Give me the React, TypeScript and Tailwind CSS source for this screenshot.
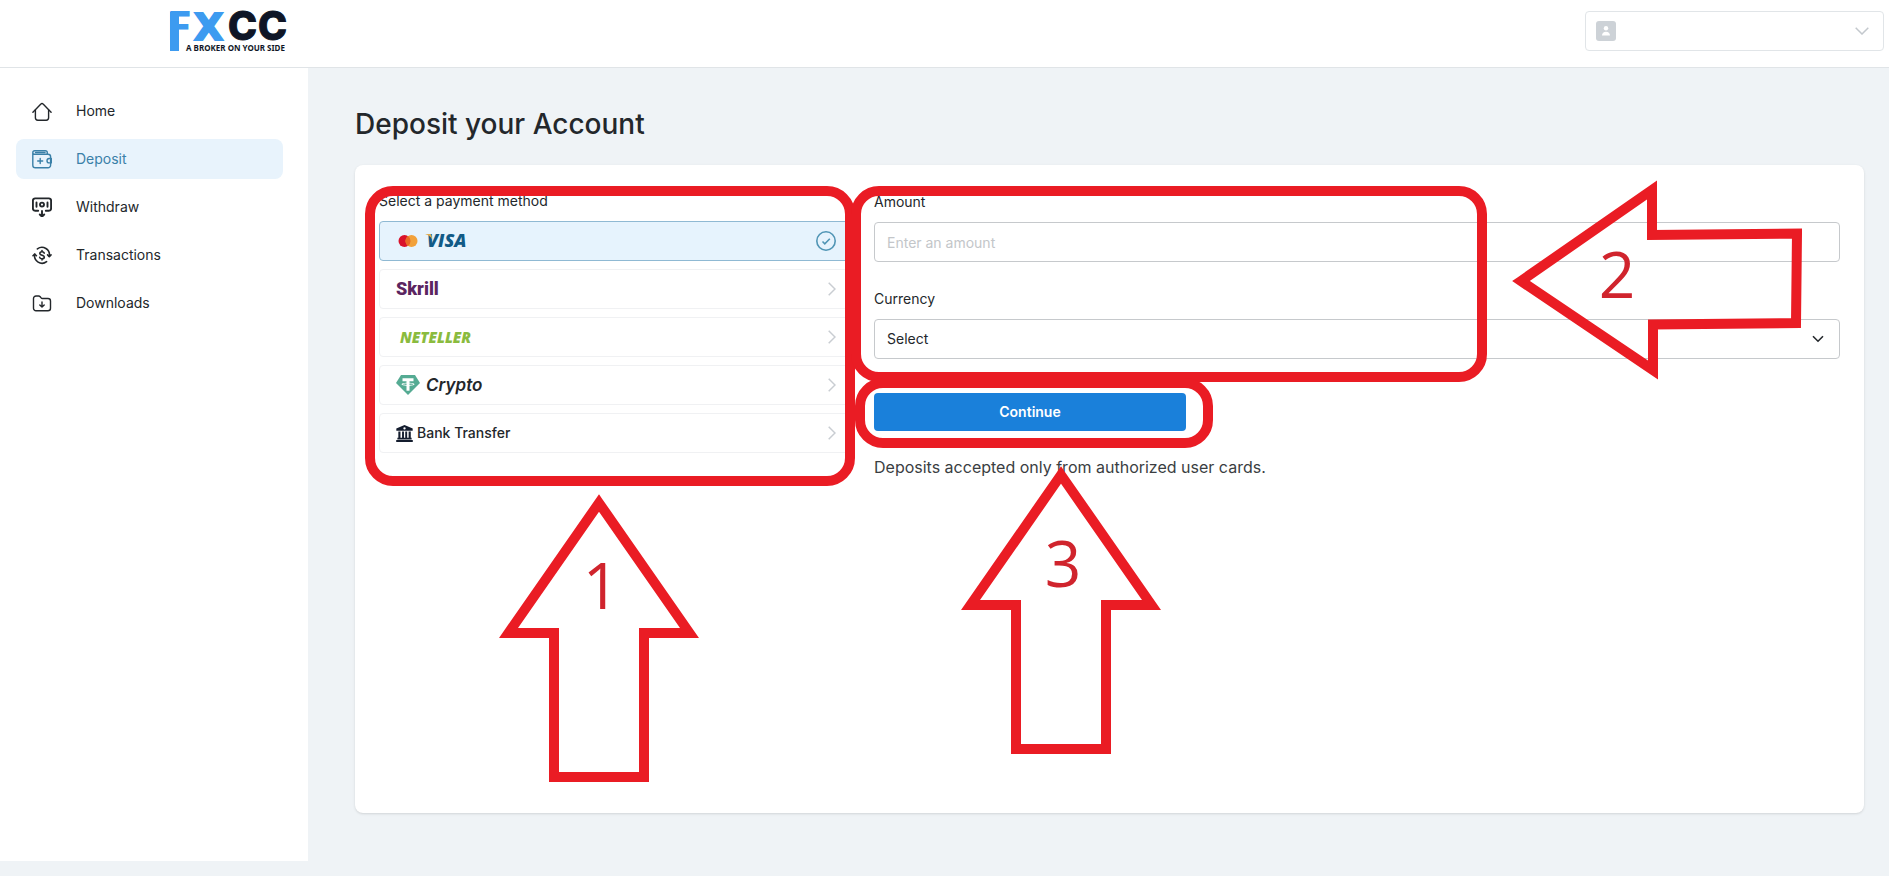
import type { ReactNode } from "react";
import clsx from "clsx";

const HomeIcon = () => (
  <svg viewBox="0 0 20 20" className="h-5 w-5 shrink-0" fill="none" stroke="currentColor" strokeWidth="1.4" strokeLinecap="round" strokeLinejoin="round">
    <path d="M.9 11.2 8.9 3a1.5 1.5 0 0 1 2.2 0l8 8.2" />
    <path d="M3.4 9v7.8a2.4 2.4 0 0 0 2.4 2.4h8.4a2.4 2.4 0 0 0 2.4-2.4V9" />
  </svg>
);

const DepositIcon = () => (
  <svg viewBox="0 0 20 20" className="h-5 w-5 shrink-0" fill="none" stroke="currentColor" strokeWidth="1.4" strokeLinecap="round" strokeLinejoin="round">
    <path d="M.8 4v12.2A2.6 2.6 0 0 0 3.4 18.800h12.600a2.600 2.600 0 0 0 2.600-2.600V7.800A2.600 2.600 0 0 0 16 5.200H2.300A1.500 1.500 0 0 1 .8 3.700 1.900 1.900 0 0 1 2.700 1.800h10.600a2 2 0 0 1 2 2V5" />
    <path d="M3.500 3.500h9.500" />
    <path d="M19.300 9.500h-2.100a2.200 2.200 0 0 0 0 4.400h2.100z" />
    <path d="M8.200 9.500v5M5.700 12h5" />
  </svg>
);

const WithdrawIcon = () => (
  <svg viewBox="0 0 20 20" className="h-5 w-5 shrink-0" fill="none" stroke="currentColor" strokeWidth="1.9" strokeLinecap="round" strokeLinejoin="round">
    <path d="M6.200 13.800H3.100A2.200 2.200 0 0 1 .9 11.600V3.600A2.200 2.200 0 0 1 3.100 1.400h13.800a2.200 2.200 0 0 1 2.200 2.200v8a2.200 2.200 0 0 1-2.200 2.200h-3.100" />
    <circle cx="10" cy="7.600" r="2" />
    <path d="M4.500 5.500v4.200M15.500 5.500v4.200M10 14v5M7.800 17.500l2.200 2.200 2.200-2.200" />
  </svg>
);

const TransactionsIcon = () => (
  <svg viewBox="0 0 20 20" className="h-5 w-5 shrink-0" fill="none" stroke="currentColor" strokeWidth="1.6" strokeLinecap="round" strokeLinejoin="round">
    <path d="M5.400 3.900A7.500 7.500 0 0 1 17.300 11.300" />
    <path d="M14.600 16.700A7.500 7.500 0 0 1 2.700 9.300" />
    <path d="m15.600 9.900 1.700 1.700 1.700-1.700M1 10.700l1.700-1.700 1.700 1.700" />
    <path d="M12.200 8.100c-.3-.9-1.100-1.300-2.200-1.300-1.300 0-2.200.6-2.200 1.700 0 2.500 4.500 1 4.500 3.500 0 1.200-1 1.800-2.300 1.800-1.200 0-2.100-.5-2.300-1.500M10 5.600v1.200M10 13.800V15" />
  </svg>
);

const DownloadsIcon = () => (
  <svg viewBox="0 0 20 20" className="h-5 w-5 shrink-0" fill="none" stroke="currentColor" strokeWidth="1.4" strokeLinecap="round" strokeLinejoin="round">
    <path d="M1.500 15.300V5.500A2.500 2.500 0 0 1 4 3h2.600c.6 0 1.200.3 1.600.8l.9 1.100c.3.400.8.600 1.300.6h5.600a2.500 2.500 0 0 1 2.500 2.500v7.300a2.500 2.500 0 0 1-2.500 2.500H4a2.500 2.500 0 0 1-2.500-2.500Z" />
    <path d="M10 8.900v5M7.800 11.900l2.200 2.200 2.200-2.200" />
  </svg>
);

const navItems = [
  { label: "Home", icon: HomeIcon },
  { label: "Deposit", icon: DepositIcon },
  { label: "Withdraw", icon: WithdrawIcon },
  { label: "Transactions", icon: TransactionsIcon },
  { label: "Downloads", icon: DownloadsIcon },
];

function Logo() {
  return (
    <svg viewBox="0 0 128 60" className="h-[60px] w-32" role="img" aria-label="FXCC">
      <rect x="5" y="12" width="9" height="39" fill="#3d9bf0" />
      <g fontFamily="Inter, sans-serif" fontWeight="800" fontSize="39" strokeWidth="1">
        <text x="3" y="40" fill="#3d9bf0">F</text>
        <text x="29" y="40" fontFamily="DejaVu Sans, sans-serif" fontWeight="700" fontSize="38" fill="#3d9bf0" stroke="#3d9bf0" strokeWidth="2">X</text>
        <text x="63" y="40" fill="#0f1626" stroke="#0f1626">C</text>
        <text x="93" y="40" fill="#0f1626" stroke="#0f1626">C</text>
      </g>
      <text x="21" y="51" fontFamily="Noto Sans, sans-serif" fontWeight="700" fontSize="8" fill="#0f1626">
        A BROKER ON YOUR SIDE
      </text>
    </svg>
  );
}

const CardLogos = () => (
  <svg viewBox="0 0 76 20" className="h-5 w-[76px]" role="img" aria-label="Mastercard and Visa">
    <circle cx="8.500" cy="10" r="6" fill="#d9122b" />
    <circle cx="15.500" cy="10" r="6" fill="#f2a13a" />
    <path d="M12 5.100a6 6 0 0 1 0 9.800 6 6 0 0 1 0-9.800Z" fill="#ea6a25" />
    <text x="31" y="16" fontFamily="Open Sans, sans-serif" fontWeight="800" fontStyle="italic" fontSize="18" fill="#115a86">VISA</text>
    <path d="M29.500 3h4.200c1 0 1.500.4 1.700 1.300l.8 4.300c-1.200-2.600-3.400-4.400-6.700-5.300Z" fill="#e0ac4b" />
  </svg>
);

const SkrillLogo = () => (
  <span className="font-[Roboto,sans-serif] text-lg leading-5 font-black text-[#5b2560]">Skrill</span>
);

const NetellerLogo = () => (
  <span className="pl-1 font-['Open_Sans',sans-serif] text-[15px] leading-5 font-extrabold text-[#8abb3e] italic">
    NETELLER
  </span>
);

const CryptoLogo = () => (
  <span className="flex items-center gap-1.5 text-[17px] leading-5 font-semibold text-[#23272b] italic">
    <svg viewBox="0 0 24 20" className="h-5 w-6">
      <path d="M5 0h14l5 8-12 12L0 8Z" fill="#55ab93" />
      <path d="M6.500 3.300h11v3h-4v1.500c3 .2 5 .8 5 1.500s-2 1.300-5 1.500v5h-3v-5c-3-.2-5-.8-5-1.500s2-1.300 5-1.500V6.300h-4Z" fill="#fff" />
      <path d="M10.500 8.600c-2.300.1-3.800.4-3.800.7s1.500.6 3.800.7ZM13.500 8.600c2.300.1 3.800.4 3.800.7s-1.500.6-3.800.7Z" fill="#55ab93" />
    </svg>
    Crypto
  </span>
);

const BankLogo = () => (
  <span className="flex items-center gap-1 text-sm leading-5 font-medium text-[#23272b]">
    <svg viewBox="0 0 16 16" className="h-[17px] w-[17px]" fill="#141d2e">
      <path fillRule="evenodd" d="M8 0 .3 3.400V5.500h15.400V3.400ZM8 2a1.100 1.100 0 1 1 0 2.200A1.100 1.100 0 0 1 8 2Z" />
      <path d="M2.200 6.200h2v6h-2zM5.700 6.200h1.800v6H5.700zM8.700 6.200h1.800v6H8.700zM11.900 6.200h2v6h-2zM1.300 12h13.400v1.700H1.300zM.2 14.200h15.600V16H.2z" />
    </svg>
    Bank Transfer
  </span>
);

const methods: { id: string; logo: ReactNode }[] = [
  { id: "card", logo: <CardLogos /> },
  { id: "skrill", logo: <SkrillLogo /> },
  { id: "neteller", logo: <NetellerLogo /> },
  { id: "crypto", logo: <CryptoLogo /> },
  { id: "bank", logo: <BankLogo /> },
];

function UpArrow({ step, labelY, className }: { step: string; labelY: number; className: string }) {
  return (
    <svg viewBox="0 0 200 290" className={clsx("pointer-events-none absolute h-[290px] w-[200px]", className)}>
      <path d="M100 10 190.500 140H145V284H55V140H9.500Z" fill="none" stroke="#ea1c24" strokeWidth="10" />
      <text x="102" y={labelY} textAnchor="middle" fontFamily="Open Sans, sans-serif" fontSize="64" fill="#d0242d">
        {step}
      </text>
    </svg>
  );
}

function LeftArrow({ step, className }: { step: string; className: string }) {
  return (
    <svg viewBox="0 0 291 202" className={clsx("pointer-events-none absolute h-[202px] w-[291px]", className)}>
      <path d="M10 102 141 11V56L286 54.500 285 144 142 145.500V191Z" fill="none" stroke="#ea1c24" strokeWidth="10" />
      <text x="106" y="119" textAnchor="middle" fontFamily="Open Sans, sans-serif" fontSize="64" fill="#d0242d">
        {step}
      </text>
    </svg>
  );
}

function Highlight({ className }: { className: string }) {
  return <div className={clsx("pointer-events-none absolute rounded-[28px] border-10 border-[#ea1c24]", className)} />;
}

export default function App() {
  return (
    <div className="flex min-h-screen flex-col bg-[#eff3f6] font-[Inter,sans-serif] text-[#23272b]">
      <header className="flex h-[68px] items-start justify-between border-b border-[#e0e4e7] bg-white pr-[5px] pl-[165px]">
        <Logo />
        <button
          type="button"
          aria-label="Account"
          className="mt-[11px] flex h-10 w-[299px] items-center justify-between rounded-sm border border-[#e1e5e8] px-2.5"
        >
          <svg viewBox="0 0 20 20" className="h-5 w-5">
            <rect width="20" height="20" rx="3" fill="#cdd2d7" />
            <circle cx="10" cy="7.200" r="2.200" fill="#fff" />
            <path d="M6 14.600c0-2.400 1.700-3.800 4-3.800s4 1.400 4 3.800Z" fill="#fff" />
          </svg>
          <svg viewBox="0 0 14 8" className="mr-1 h-2 w-3.5" fill="none" stroke="#c3c8cd" strokeWidth="1.500">
            <path d="m.7.7 6.300 6.300L13.300.7" />
          </svg>
        </button>
      </header>

      <div className="flex flex-1 pb-[15px]">
        <aside className="w-[308px] shrink-0 bg-white pt-[23px] pr-[25px] pl-4">
          <nav className="flex flex-col gap-2">
            {navItems.map(({ label, icon: Icon }) => {
              const active = label === "Deposit";
              return (
                <a
                  key={label}
                  href="#"
                  className={clsx(
                    "flex h-10 items-center gap-6 rounded-lg px-4 text-sm",
                    active && "bg-[#e8f3fc] text-[#3a80a8]"
                  )}
                >
                  <Icon />
                  {label}
                </a>
              );
            })}
          </nav>
        </aside>

        <main className="flex flex-1 flex-col pt-[37px] pr-[25px] pb-12 pl-[47px]">
          <h1 className="mb-[22px] text-[28px] leading-[38px] font-medium">Deposit your Account</h1>

          <section className="grid flex-1 grid-cols-3 content-start gap-6 rounded-lg bg-white p-6 shadow-sm">
            <div className="relative">
              <h2 className="mb-2 text-sm leading-6">Select a payment method</h2>
              <div className="flex flex-col gap-2">
                {methods.map(({ id, logo }) => {
                  const selected = id === "card";
                  return (
                    <button
                      key={id}
                      type="button"
                      aria-pressed={selected}
                      className={clsx(
                        "flex h-10 items-center justify-between rounded-sm border pr-[13px] pl-4",
                        selected ? "border-[#8fb9d3] bg-[#e6f3fd]" : "border-[#f0f1f3]"
                      )}
                    >
                      {logo}
                      {selected ? (
                        <svg viewBox="0 0 20 20" className="h-5 w-5" fill="none" stroke="#5095b5" strokeWidth="1.600">
                          <circle cx="10" cy="10" r="9.200" />
                          <path d="m6.500 10.500 2.300 2.300 5-5" />
                        </svg>
                      ) : (
                        <svg viewBox="0 0 8 14" className="h-3.5 w-2" fill="none" stroke="#c9cdd2" strokeWidth="1.500">
                          <path d="m.7.7 6.300 6.300L.7 13.300" />
                        </svg>
                      )}
                    </button>
                  );
                })}
              </div>

              <Highlight className="-top-[3px] -right-[5px] -left-[14px] h-[300px]" />
              <UpArrow step="1" labelY={116} className="top-[304px] left-[120px]" />
            </div>

            <form className="relative col-span-2 flex flex-col items-start">
              <label htmlFor="amount" className="mb-2 text-sm leading-[25px]">
                Amount
              </label>
              <input
                id="amount"
                type="text"
                placeholder="Enter an amount"
                className="h-10 w-full rounded-sm border border-[#c6c9cc] px-3 text-sm placeholder:text-[#c3c6c9]"
              />

              <label htmlFor="currency" className="mt-6 mb-2 text-sm leading-[25px]">
                Currency
              </label>
              <div className="relative w-full">
                <select
                  id="currency"
                  className="h-10 w-full appearance-none rounded-sm border border-[#c6c9cc] bg-white px-3 text-sm"
                >
                  <option>Select</option>
                </select>
                <svg
                  viewBox="0 0 12 8"
                  className="pointer-events-none absolute top-4 right-4 h-2 w-3"
                  fill="none"
                  stroke="#23272b"
                  strokeWidth="1.600"
                >
                  <path d="m1 1.200 5 5 5-5" />
                </svg>
              </div>

              <button
                type="button"
                className="mt-[34px] h-[38px] w-[312px] rounded-sm bg-[#1a80da] text-sm font-semibold text-white"
              >
                Continue
              </button>
              <p className="mt-6 text-base text-[#3a3e42]">Deposits accepted only from authorized user cards.</p>

              <Highlight className="-top-[3px] -left-[23px] h-[196px] w-[636px]" />
              <Highlight className="top-[189px] -left-[19px] h-[70px] w-[358px]" />
              <LeftArrow step="2" className="-top-[10px] right-[38px]" />
              <UpArrow step="3" labelY={122} className="top-[276px] left-[87px]" />
            </form>
          </section>
        </main>
      </div>
    </div>
  );
}
